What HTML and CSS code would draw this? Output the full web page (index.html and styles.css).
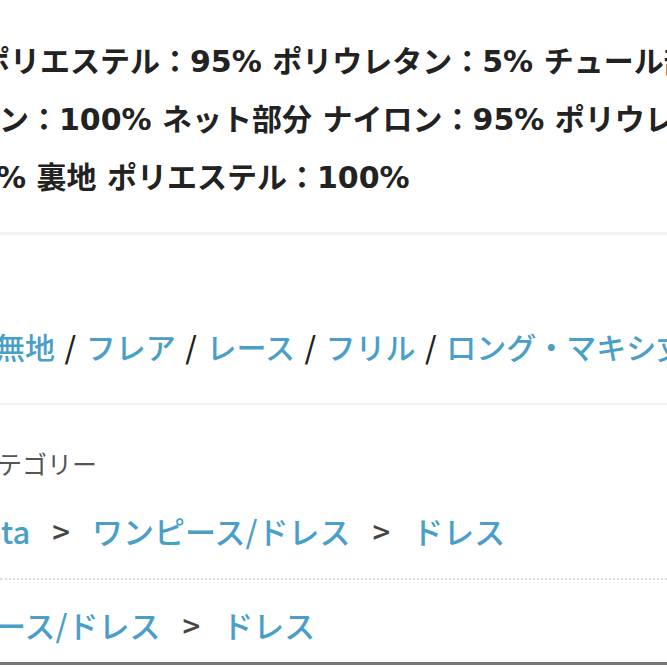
FILE: index.html
```html
<!DOCTYPE html>
<html lang="ja">
<head>
<meta charset="utf-8">
<title>商品詳細</title>
<link rel="stylesheet" href="styles.css">
</head>
<body>
<div class="page">
  <section class="material">
    <div class="line l1">ポリエステル：95% ポリウレタン：5% チュール部分</div>
    <div class="line l2">ン：100% ネット部分 ナイロン：95% ポリウレタン：5%</div>
    <div class="line l3">% 裏地 ポリエステル：100%</div>
  </section>
  <div class="sep"></div>
  <section class="tags">
    <div class="tagline"><a class="tag">無地</a><span class="slash">/</span><a class="tag">フレア</a><span class="slash">/</span><a class="tag">レース</a><span class="slash">/</span><a class="tag">フリル</a><span class="slash">/</span><a class="tag">ロング・マキシ丈</a></div>
  </section>
  <div class="sep thin"></div>
  <section class="category">
    <div class="label">テゴリー</div>
    <div class="crumbs c1"><a class="tag">ta</a><span class="gt">&gt;</span><a class="tag">ワンピース/ドレス</a><span class="gt">&gt;</span><a class="tag">ドレス</a></div>
    <div class="dotted"></div>
    <div class="crumbs c2"><a class="tag">ース/ドレス</a><span class="gt">&gt;</span><a class="tag">ドレス</a></div>
  </section>
  <div class="bottom"></div>
</div>
</body>
</html>
```
FILE: styles.css
```css
html, body {
  margin: 0;
  padding: 0;
  background: #fff;
}
body {
  width: 667px;
  height: 667px;
  overflow: hidden;
  font-family: "DejaVu Sans", "Noto Sans CJK JP", sans-serif;
  color: #1c1c1c;
}
.page {
  display: flex;
  flex-direction: column;
}
.material {
  padding: 33px 0 25px;
}
.line {
  font-size: 30px;
  line-height: 58px;
  font-weight: 700;
  white-space: nowrap;
  color: #222;
}
.l1 { margin-left: -20px; }
.l2 { margin-left: -1px; }
.l3 { margin-left: -4px; }
.sep {
  height: 3px;
  background: #f2f2f2;
}
.sep.thin {
  height: 2px;
}
.tags {
  padding: 91px 0 37px;
}
.tagline {
  font-size: 30px;
  line-height: 40px;
  font-weight: 500;
  white-space: nowrap;
  margin-left: -5px;
  font-family: "Noto Sans CJK JP", sans-serif;
}
.tag {
  color: #4a9fc9;
}
.slash {
  color: #222;
  margin: 0 9.5px;
}
.category {
  padding-top: 43px;
}
.label {
  font-size: 25px;
  line-height: 30px;
  color: #555;
  white-space: nowrap;
  margin-left: -3px;
  font-family: "Noto Sans CJK JP", sans-serif;
}
.crumbs {
  font-size: 31px;
  line-height: 40px;
  font-weight: 500;
  white-space: nowrap;
  font-family: "Noto Sans CJK JP", sans-serif;
}
.c1 {
  margin-top: 33px;
  margin-left: 1px;
}
.c2 {
  margin-top: 25px;
  margin-left: -5px;
}
.gt {
  color: #444;
  margin: 0 22px;
}
.dotted {
  margin-top: 27px;
  border-top: 2px dotted #dcdcdc;
}
.bottom {
  margin-top: 17px;
  height: 3px;
  background: #777;
}
```
